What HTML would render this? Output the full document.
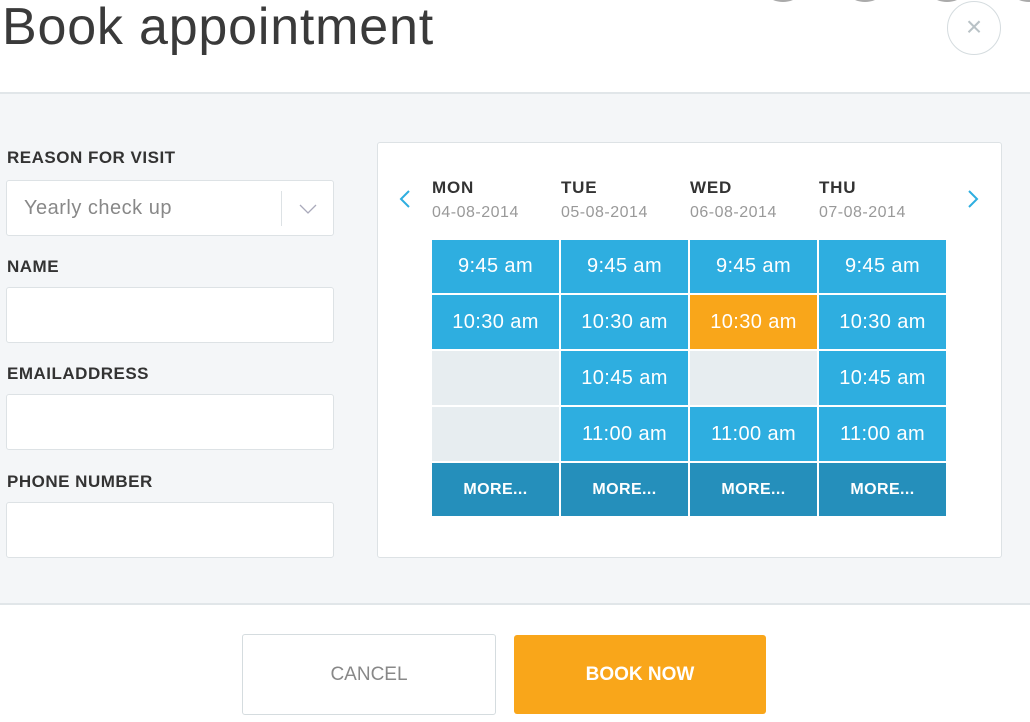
<!DOCTYPE html><html><head><style>
body{margin:0;width:1030px;height:722px;overflow:hidden;background:#fff;font-family:"Liberation Sans",sans-serif;position:relative}
.a{position:absolute}
h1{position:absolute;left:2px;top:-3px;margin:0;font-weight:normal;font-size:52px;color:#3a3a3a;letter-spacing:0.8px}
.mid{position:absolute;left:0;top:92px;width:1030px;height:509px;background:#f4f6f8;border-top:2px solid #e1e6e9;border-bottom:2px solid #e1e6e9}
.lab{position:absolute;left:7px;font-weight:bold;font-size:17px;color:#333;letter-spacing:0.5px}
.in{position:absolute;left:6px;width:328px;height:56px;background:#fff;border:1px solid #dde2e5;border-radius:3px;box-sizing:border-box}
.cal{position:absolute;left:377px;top:142px;width:625px;height:416px;background:#fff;border:1px solid #dde2e5;border-radius:3px;box-sizing:border-box}
.d{position:absolute;font-weight:bold;font-size:17px;color:#333;letter-spacing:0.8px}
.dt{position:absolute;font-size:16px;color:#999;letter-spacing:0.5px}
.c{position:absolute;width:127px;display:flex;align-items:center;justify-content:center;color:#fff;font-size:20px;letter-spacing:0.4px;background:#2eaee0}
.e{background:#e7edf0}.o{background:#f9a61a}.m{background:#258fbb;font-size:16px;font-weight:bold}
.circ{position:absolute;width:50px;height:50px;border-radius:50%;background:#aaa}
</style></head><body>
<div class="circ" style="left:758px;top:-48px"></div><div class="circ" style="left:840px;top:-48px"></div><div class="circ" style="left:922px;top:-48px"></div><div class="circ" style="left:1004px;top:-48px"></div>
<h1>Book appointment</h1>
<div class="a" style="left:947px;top:1px;width:54px;height:54px;border:1px solid #d5dcdf;border-radius:50%;background:#fff;box-sizing:border-box;text-align:center;line-height:50px;color:#b9c2c6;font-size:28px;font-weight:300">×</div>
<div class="mid"></div>
<div class="lab" style="top:148px">REASON FOR VISIT</div>
<div class="in" style="top:180px"><span class="a" style="left:17px;top:16px;font-size:20px;color:#888;letter-spacing:0.5px">Yearly check up</span><div class="a" style="left:274px;top:10px;width:1px;height:35px;background:#dde2e5"></div><svg class="a" style="left:292px;top:22px" width="18" height="12"><path d="M1 2l8 8 8-8" fill="none" stroke="#aab" stroke-width="1.3"/></svg></div>
<div class="lab" style="top:257px">NAME</div>
<div class="in" style="top:287px"></div>
<div class="lab" style="top:364px">EMAILADDRESS</div>
<div class="in" style="top:394px"></div>
<div class="lab" style="top:472px">PHONE NUMBER</div>
<div class="in" style="top:502px"></div>
<div class="cal"></div>
<svg class="a" style="left:398px;top:189px" width="14" height="20"><path d="M11 2L3 10l8 8" fill="none" stroke="#2eaee0" stroke-width="2"/></svg>
<svg class="a" style="left:966px;top:189px" width="14" height="20"><path d="M3 2l8 8-8 8" fill="none" stroke="#2eaee0" stroke-width="2"/></svg>
<div class="d" style="left:432px;top:178px">MON</div><div class="dt" style="left:432px;top:204px">04-08-2014</div>
<div class="d" style="left:561px;top:178px">TUE</div><div class="dt" style="left:561px;top:204px">05-08-2014</div>
<div class="d" style="left:690px;top:178px">WED</div><div class="dt" style="left:690px;top:204px">06-08-2014</div>
<div class="d" style="left:819px;top:178px">THU</div><div class="dt" style="left:819px;top:204px">07-08-2014</div>
<div class="c" style="left:432px;top:240px;height:53px">9:45 am</div>
<div class="c" style="left:561px;top:240px;height:53px">9:45 am</div>
<div class="c" style="left:690px;top:240px;height:53px">9:45 am</div>
<div class="c" style="left:819px;top:240px;height:53px">9:45 am</div>
<div class="c" style="left:432px;top:295px;height:54px">10:30 am</div>
<div class="c" style="left:561px;top:295px;height:54px">10:30 am</div>
<div class="c o" style="left:690px;top:295px;height:54px">10:30 am</div>
<div class="c" style="left:819px;top:295px;height:54px">10:30 am</div>
<div class="c e" style="left:432px;top:351px;height:54px"></div>
<div class="c" style="left:561px;top:351px;height:54px">10:45 am</div>
<div class="c e" style="left:690px;top:351px;height:54px"></div>
<div class="c" style="left:819px;top:351px;height:54px">10:45 am</div>
<div class="c e" style="left:432px;top:407px;height:54px"></div>
<div class="c" style="left:561px;top:407px;height:54px">11:00 am</div>
<div class="c" style="left:690px;top:407px;height:54px">11:00 am</div>
<div class="c" style="left:819px;top:407px;height:54px">11:00 am</div>
<div class="c m" style="left:432px;top:463px;height:53px">MORE...</div>
<div class="c m" style="left:561px;top:463px;height:53px">MORE...</div>
<div class="c m" style="left:690px;top:463px;height:53px">MORE...</div>
<div class="c m" style="left:819px;top:463px;height:53px">MORE...</div>
<div class="a" style="left:242px;top:634px;width:254px;height:81px;border:1px solid #d5dcdf;border-radius:3px;box-sizing:border-box;display:flex;align-items:center;justify-content:center;color:#888;font-size:19px">CANCEL</div>
<div class="a" style="left:514px;top:635px;width:252px;height:79px;background:#f9a61a;border-radius:3px;display:flex;align-items:center;justify-content:center;color:#fff;font-size:19px;font-weight:bold">BOOK NOW</div>
</body></html>
